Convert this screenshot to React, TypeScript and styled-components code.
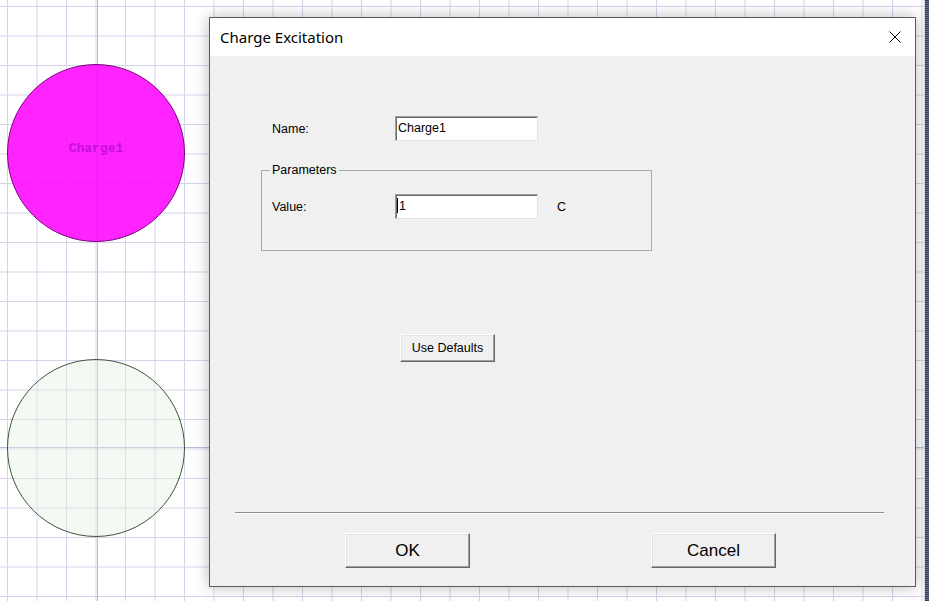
import React from "react";
import styled, { createGlobalStyle } from "styled-components";

const GlobalStyle = createGlobalStyle`
  html, body {
    margin: 0;
    padding: 0;
    overflow: hidden;
    background: #ffffff;
  }
`;

const palette = {
  face: "#f0f0f0",
  grid: "#d6d3e8",
  gridMajor: "#bdb9da",
  shadowDark: "#696969",
  shadow: "#a0a0a0",
  light: "#e3e3e3",
  text: "#000000",
};

const uiFont = `"Liberation Sans", Arial, sans-serif`;

const Screen = styled.div`
  display: flex;
  width: 929px;
  height: 601px;
`;

// axis lines (x=97, y=447) drawn once, minor grid every 29.5px
const Canvas = styled.div`
  position: relative;
  flex: 1;
  height: 100%;
  overflow: hidden;
  border-right: 1px solid #cfcfcf;
  background-color: #ffffff;
  background-image:
    linear-gradient(to right, ${palette.gridMajor} 1px, transparent 1px),
    linear-gradient(to bottom, ${palette.gridMajor} 1px, transparent 1px),
    linear-gradient(to right, ${palette.grid} 1px, transparent 1px),
    linear-gradient(to bottom, ${palette.grid} 1px, transparent 1px);
  background-size: 1200px 100%, 100% 900px, 29.5px 29.5px, 29.5px 29.5px;
  background-repeat: no-repeat, no-repeat, repeat, repeat;
  background-position: 97px 0, 0 447px, 7px 6px, 7px 6px;
`;

const EdgeStrip = styled.div`
  width: 4px;
  height: 100%;
  background-color: #45516e;
  background-image: repeating-linear-gradient(
    to bottom,
    #2f3a55 0 1px,
    #6a7696 1px 2px
  );
`;

const Node = styled.div<{ $x: number; $y: number; $fill: string; $stroke: string }>`
  position: absolute;
  left: ${(p) => p.$x}px;
  top: ${(p) => p.$y}px;
  width: 178px;
  height: 178px;
  box-sizing: border-box;
  border-radius: 50%;
  border: 1px solid ${(p) => p.$stroke};
  background: ${(p) => p.$fill};
  display: flex;
  align-items: center;
  justify-content: center;
`;

const NodeLabel = styled.span`
  font-family: "Liberation Mono", "DejaVu Sans Mono", monospace;
  font-weight: bold;
  font-size: 13px;
  color: #c410d6;
  margin-top: -10px;
`;

const Dialog = styled.div`
  position: absolute;
  left: 209px;
  top: 17px;
  width: 707px;
  height: 570px;
  box-sizing: border-box;
  border: 1px solid #5c5c5c;
  background: ${palette.face};
  box-shadow: 0 0 14px rgba(0, 0, 0, 0.28);
  display: flex;
  flex-direction: column;
`;

const TitleBar = styled.div`
  height: 38px;
  flex: none;
  background: #ffffff;
  display: flex;
  align-items: center;
  justify-content: space-between;
  padding: 0 14px 0 10px;
`;

const Title = styled.span`
  font-family: "Noto Sans", "Open Sans", sans-serif;
  font-size: 15px;
  color: #000000;
  margin-top: -1px;
`;

const CloseButton = styled.div`
  width: 12px;
  height: 12px;
  display: flex;
`;

const Body = styled.div`
  flex: 1;
  display: flex;
  flex-direction: column;
  font-family: ${uiFont};
  font-size: 12.5px;
  color: ${palette.text};
`;

const FieldRow = styled.div<{ $top?: number; $left: number }>`
  display: flex;
  align-items: center;
  margin-top: ${(p) => p.$top ?? 0}px;
  padding-left: ${(p) => p.$left}px;
`;

const Label = styled.span`
  width: 123px;
  flex: none;
`;

const TextField = styled.div`
  width: 143px;
  height: 25px;
  box-sizing: border-box;
  background: #ffffff;
  border-style: solid;
  border-width: 1px;
  border-color: ${palette.shadow} ${palette.light} ${palette.light} ${palette.shadow};
  box-shadow: inset 1px 1px 0 ${palette.shadowDark};
  display: flex;
  align-items: center;
  padding-left: 2px;
  padding-bottom: 2px;
`;

const Caret = styled.span`
  width: 1px;
  height: 15px;
  background: #000000;
  margin-left: -1px;
  margin-right: 1px;
`;

const Unit = styled.span`
  margin-left: 19px;
`;

const GroupBox = styled.fieldset`
  margin: 22px 0 0 51px;
  padding: 17px 0 31px 0;
  width: 391px;
  box-sizing: border-box;
  border: 1px solid #a9a9a9;
  min-inline-size: auto;
`;

const GroupLegend = styled.legend`
  margin-left: 8px;
  padding: 0 2px;
  line-height: 14px;
`;

const PushButton = styled.button<{ $w: number; $h: number; $size?: number }>`
  width: ${(p) => p.$w}px;
  height: ${(p) => p.$h}px;
  flex: none;
  box-sizing: border-box;
  margin: 0;
  padding: 0;
  font-family: ${uiFont};
  font-size: ${(p) => p.$size ?? 12.5}px;
  color: #000000;
  background: ${palette.face};
  border-style: solid;
  border-width: 1px;
  border-color: #ffffff ${palette.shadowDark} ${palette.shadowDark} #ffffff;
  box-shadow: inset -1px -1px 0 ${palette.shadow}, inset 1px 1px 0 ${palette.light};
  display: flex;
  align-items: center;
  justify-content: center;
`;

const DefaultsRow = styled.div`
  margin: 83px 0 0 190px;
  display: flex;
`;

const Separator = styled.div`
  margin: 150px 0 0 25px;
  width: 649px;
  height: 1px;
  background: #8c8c8c;
  border-bottom: 1px solid #ffffff;
`;

const ButtonRow = styled.div`
  display: flex;
  gap: 181px;
  margin: 19px 0 0 135px;
`;

const CloseIcon = () => (
  <svg width="12" height="12" viewBox="0 0 12 12">
    <path d="M0.5 0.5 L11.5 11.5 M11.5 0.5 L0.5 11.5" stroke="#000" strokeWidth="1" fill="none" />
  </svg>
);

export default function App() {
  return (
    <Screen>
      <GlobalStyle />
      <Canvas>
        <Node $x={7} $y={64} $fill="rgba(255, 0, 255, 0.86)" $stroke="#7d007d">
          <NodeLabel>Charge1</NodeLabel>
        </Node>
        <Node $x={7} $y={359} $fill="rgba(228, 240, 228, 0.42)" $stroke="#3b573b" />

        <Dialog>
          <TitleBar>
            <Title>Charge Excitation</Title>
            <CloseButton>
              <CloseIcon />
            </CloseButton>
          </TitleBar>
          <Body>
            <FieldRow $top={60} $left={62}>
              <Label>Name:</Label>
              <TextField>Charge1</TextField>
            </FieldRow>

            <GroupBox>
              <GroupLegend>Parameters</GroupLegend>
              <FieldRow $left={10}>
                <Label>Value:</Label>
                <TextField>
                  <Caret />1
                </TextField>
                <Unit>C</Unit>
              </FieldRow>
            </GroupBox>

            <DefaultsRow>
              <PushButton $w={95} $h={28}>Use Defaults</PushButton>
            </DefaultsRow>

            <Separator />

            <ButtonRow>
              <PushButton $w={125} $h={35} $size={17}>OK</PushButton>
              <PushButton $w={125} $h={35} $size={17}>Cancel</PushButton>
            </ButtonRow>
          </Body>
        </Dialog>
      </Canvas>
      <EdgeStrip />
    </Screen>
  );
}
